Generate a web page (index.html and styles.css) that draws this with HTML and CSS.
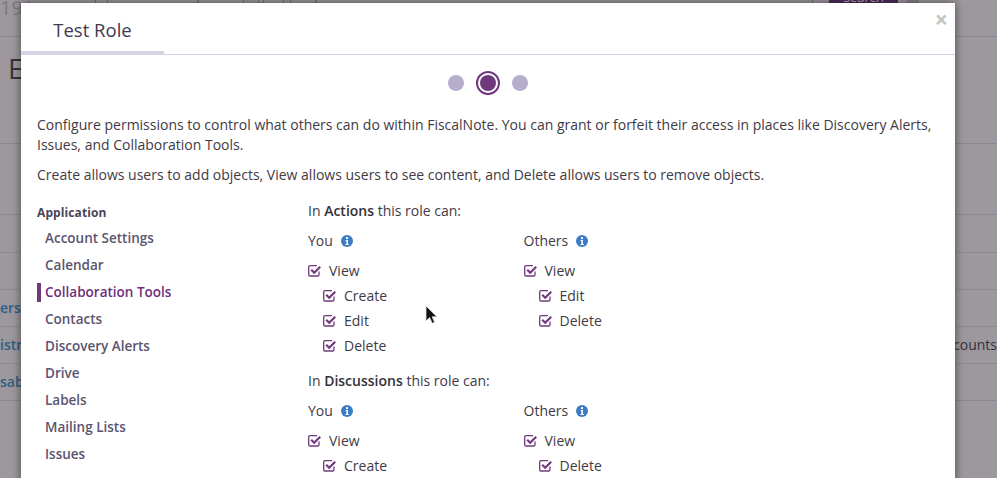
FILE: index.html
```html
<!DOCTYPE html>
<html lang="en">
<head>
<meta charset="utf-8">
<title>Test Role</title>
<link rel="stylesheet" href="styles.css">
</head>
<body>
<div class="page">
  <div class="page-top"><span class="page-date">19/</span><span class="page-ticks"></span><span class="page-search">Search</span><span class="page-square"></span></div>
  <div class="page-title"><span>E</span></div>
  <div class="page-row page-row-tall"></div>
  <div class="page-row page-row-mid"></div>
  <div class="page-row"></div>
  <div class="page-row"><a>ers</a></div>
  <div class="page-row"><a>istr</a><span>counts</span></div>
  <div class="page-row"><a>sab</a></div>
</div>
<div class="modal">
  <button class="close" aria-label="Close">&#215;</button>
  <div class="tabs"><div class="tab">Test Role</div></div>
  <div class="steps"><span class="dot"></span><span class="dot dot-on"></span><span class="dot"></span></div>
  <div class="intro">
    <p>Configure permissions to control what others can do within FiscalNote. You can grant or forfeit their access in places like Discovery Alerts, Issues, and Collaboration Tools.</p>
    <p>Create allows users to add objects, View allows users to see content, and Delete allows users to remove objects.</p>
  </div>
  <div class="body">
    <nav class="nav">
      <div class="nav-head">Application</div>
      <a class="nav-item">Account Settings</a>
      <a class="nav-item">Calendar</a>
      <a class="nav-item nav-active">Collaboration Tools</a>
      <a class="nav-item">Contacts</a>
      <a class="nav-item">Discovery Alerts</a>
      <a class="nav-item">Drive</a>
      <a class="nav-item">Labels</a>
      <a class="nav-item">Mailing Lists</a>
      <a class="nav-item">Issues</a>
    </nav>
    <div class="perms">
      <section class="perm">
        <div class="perm-title">In <b>Actions</b> this role can:</div>
        <div class="cols">
          <div class="col">
            <div class="col-head">You <svg class="info" viewBox="0 0 12 12"><circle cx="6" cy="6" r="6"/><rect x="5" y="2.1" width="2" height="1.9" fill="#fff"/><path d="M4.6 5h2.4v3.9h.8V10H4.5V8.9h.9V6.1h-.8z" fill="#fff"/></svg></div>
            <label class="check"><svg class="box" viewBox="0 0 13 13"><path class="box-frame" d="M11 7.500v3.200A1.300 1.300 0 0 1 9.700 12H2A1.300 1.300 0 0 1 .7 10.700V3A1.300 1.300 0 0 1 2 1.700h7"/><path class="box-tick" d="M3.200 5.800l3 3 6-6"/></svg>View</label>
            <label class="check sub"><svg class="box" viewBox="0 0 13 13"><path class="box-frame" d="M11 7.500v3.200A1.300 1.300 0 0 1 9.700 12H2A1.300 1.300 0 0 1 .7 10.700V3A1.300 1.300 0 0 1 2 1.700h7"/><path class="box-tick" d="M3.200 5.800l3 3 6-6"/></svg>Create</label>
            <label class="check sub"><svg class="box" viewBox="0 0 13 13"><path class="box-frame" d="M11 7.500v3.200A1.300 1.300 0 0 1 9.700 12H2A1.300 1.300 0 0 1 .7 10.700V3A1.300 1.300 0 0 1 2 1.700h7"/><path class="box-tick" d="M3.200 5.800l3 3 6-6"/></svg>Edit</label>
            <label class="check sub"><svg class="box" viewBox="0 0 13 13"><path class="box-frame" d="M11 7.500v3.200A1.300 1.300 0 0 1 9.700 12H2A1.300 1.300 0 0 1 .7 10.700V3A1.300 1.300 0 0 1 2 1.700h7"/><path class="box-tick" d="M3.200 5.800l3 3 6-6"/></svg>Delete</label>
          </div>
          <div class="col">
            <div class="col-head">Others <svg class="info" viewBox="0 0 12 12"><circle cx="6" cy="6" r="6"/><rect x="5" y="2.1" width="2" height="1.9" fill="#fff"/><path d="M4.6 5h2.4v3.9h.8V10H4.5V8.9h.9V6.1h-.8z" fill="#fff"/></svg></div>
            <label class="check"><svg class="box" viewBox="0 0 13 13"><path class="box-frame" d="M11 7.500v3.200A1.300 1.300 0 0 1 9.700 12H2A1.300 1.300 0 0 1 .7 10.700V3A1.300 1.300 0 0 1 2 1.700h7"/><path class="box-tick" d="M3.200 5.800l3 3 6-6"/></svg>View</label>
            <label class="check sub"><svg class="box" viewBox="0 0 13 13"><path class="box-frame" d="M11 7.500v3.200A1.300 1.300 0 0 1 9.700 12H2A1.300 1.300 0 0 1 .7 10.700V3A1.300 1.300 0 0 1 2 1.700h7"/><path class="box-tick" d="M3.200 5.800l3 3 6-6"/></svg>Edit</label>
            <label class="check sub"><svg class="box" viewBox="0 0 13 13"><path class="box-frame" d="M11 7.500v3.200A1.300 1.300 0 0 1 9.700 12H2A1.300 1.300 0 0 1 .7 10.700V3A1.300 1.300 0 0 1 2 1.700h7"/><path class="box-tick" d="M3.200 5.800l3 3 6-6"/></svg>Delete</label>
          </div>
        </div>
      </section>
      <section class="perm">
        <div class="perm-title">In <b>Discussions</b> this role can:</div>
        <div class="cols">
          <div class="col">
            <div class="col-head">You <svg class="info" viewBox="0 0 12 12"><circle cx="6" cy="6" r="6"/><rect x="5" y="2.1" width="2" height="1.9" fill="#fff"/><path d="M4.6 5h2.4v3.9h.8V10H4.5V8.9h.9V6.1h-.8z" fill="#fff"/></svg></div>
            <label class="check"><svg class="box" viewBox="0 0 13 13"><path class="box-frame" d="M11 7.500v3.200A1.300 1.300 0 0 1 9.700 12H2A1.300 1.300 0 0 1 .7 10.700V3A1.300 1.300 0 0 1 2 1.700h7"/><path class="box-tick" d="M3.200 5.800l3 3 6-6"/></svg>View</label>
            <label class="check sub"><svg class="box" viewBox="0 0 13 13"><path class="box-frame" d="M11 7.500v3.200A1.300 1.300 0 0 1 9.700 12H2A1.300 1.300 0 0 1 .7 10.700V3A1.300 1.300 0 0 1 2 1.700h7"/><path class="box-tick" d="M3.200 5.800l3 3 6-6"/></svg>Create</label>
          </div>
          <div class="col">
            <div class="col-head">Others <svg class="info" viewBox="0 0 12 12"><circle cx="6" cy="6" r="6"/><rect x="5" y="2.1" width="2" height="1.9" fill="#fff"/><path d="M4.6 5h2.4v3.9h.8V10H4.5V8.9h.9V6.1h-.8z" fill="#fff"/></svg></div>
            <label class="check"><svg class="box" viewBox="0 0 13 13"><path class="box-frame" d="M11 7.500v3.200A1.300 1.300 0 0 1 9.700 12H2A1.300 1.300 0 0 1 .7 10.700V3A1.300 1.300 0 0 1 2 1.700h7"/><path class="box-tick" d="M3.200 5.800l3 3 6-6"/></svg>View</label>
            <label class="check sub"><svg class="box" viewBox="0 0 13 13"><path class="box-frame" d="M11 7.500v3.200A1.300 1.300 0 0 1 9.700 12H2A1.300 1.300 0 0 1 .7 10.700V3A1.300 1.300 0 0 1 2 1.700h7"/><path class="box-tick" d="M3.200 5.800l3 3 6-6"/></svg>Delete</label>
          </div>
        </div>
      </section>
    </div>
  </div>
  <svg class="cursor" viewBox="0 0 12 20"><path d="M1 1v15l3.600-3.400 2.600 5.600 2.400-1-2.500-5.400h4.800z" fill="#111" stroke="#ddd" stroke-width=".8"/></svg>
</div>
</body>
</html>
```
FILE: styles.css
```css
html, body { margin: 0; height: 100%; overflow: hidden; }
body { background: #9d989d; font-family: "Open Sans", sans-serif; color: #3f3a44; }
.page { display: flex; flex-direction: column; height: 478px; }
.page-top { height: 36px; border-bottom: 1px solid #8b8797; display: flex; font-size: 20px; color: #7c7880; position: relative; }
.page-date { margin-top: -6px; }
.page-ticks { position: absolute; left: 0; top: 0; width: 820px; height: 3px; background:
  linear-gradient(#77737c, #77737c) 95px 0 / 1px 3px no-repeat,
  linear-gradient(#77737c, #77737c) 107px 0 / 1px 3px no-repeat,
  linear-gradient(#77737c, #77737c) 197px 0 / 2px 3px no-repeat,
  linear-gradient(#77737c, #77737c) 243px 0 / 1px 3px no-repeat,
  linear-gradient(#77737c, #77737c) 258px 0 / 1px 3px no-repeat,
  linear-gradient(#77737c, #77737c) 263px 0 / 1px 3px no-repeat,
  linear-gradient(#77737c, #77737c) 283px 0 / 1px 3px no-repeat,
  linear-gradient(#77737c, #77737c) 290px 0 / 1px 3px no-repeat,
  linear-gradient(#77737c, #77737c) 315px 0 / 2px 3px no-repeat,
  linear-gradient(#77737c, #77737c) 812px 0 / 1px 3px no-repeat; }
.page-search { position: absolute; left: 829px; top: -10px; width: 69px; height: 14px; background: #4f2c5a; color: #b8a8bd; font-size: 13px; line-height: 14px; text-align: center; }
.page-square { position: absolute; left: 907px; top: -8px; width: 12px; height: 12px; background: #85818a; }
.page-title { height: 106px; border-bottom: 1px solid #8b8797; font-size: 28px; color: #37333b; padding-left: 8px; line-height: 62px; }
.page-row { height: 36px; border-bottom: 1px solid #8d8990; font-size: 14px; line-height: 36px; display: flex; justify-content: space-between; color: #34323a; }
.page-row a { color: #2f5f86; font-weight: 600; }
.page-row:last-child { border-bottom-color: #8b8797; }
.page-row-tall { height: 70px; border-bottom-color: #8b8797; }
.page-row-mid { height: 37px; }
.modal { position: absolute; left: 21px; top: 3px; width: 934px; height: 500px; background: #fff; box-shadow: 0 0 9px rgba(0,0,0,.55); }
.close { position: absolute; right: 7px; top: 5px; padding: 0; border: 0; background: none; font: 700 23px/23px "Open Sans", sans-serif; color: #c4c4c4; }
.tabs { height: 51px; border-bottom: 1px solid #d5d2e4; display: flex; }
.tab { width: 143px; height: 48px; border-bottom: 3px solid #d5d2e4; text-align: center; font-size: 18.5px; line-height: 54px; color: #3f3a50; }
.steps { display: flex; justify-content: center; align-items: center; gap: 12px; height: 56px; }
.dot { width: 16px; height: 16px; border-radius: 50%; background: #b6aecb; }
.dot-on { box-sizing: content-box; padding: 2px; border: 2px solid #6f3a7c; background: #6f3a7c content-box; }
.intro { padding: 4px 16px 0; font-size: 14px; line-height: 20px; color: #3f3a44; }
.intro p { margin: 0 0 10px; }
.body { display: flex; margin-top: 18px; padding-left: 16px; }
.nav { width: 271px; flex: none; }
.nav-head { font-size: 12px; font-weight: 700; line-height: 20px; margin-bottom: 2px; color: #4b4558; letter-spacing: .1px; }
.nav-item { display: block; height: 27px; line-height: 27px; padding-left: 8px; font-size: 13.5px; font-weight: 600; color: #5a546f; position: relative; }
.nav-active { color: #6f2f7c; }
.nav-active::before { content: ""; position: absolute; left: 0; top: 4px; width: 4px; height: 19px; background: #6f3a7c; }
.perms { margin-top: -2px; }
.perm { margin-bottom: 13px; }
.perm-title { font-size: 14px; line-height: 20px; color: #3f3a44; }
.perm-title b { font-weight: 600; color: #34303a; }
.cols { display: flex; margin-top: 8px; }
.col { width: 215.5px; }
.col-head { height: 24px; line-height: 24px; font-size: 14px; display: flex; align-items: center; gap: 8px; margin-bottom: 5px; }
.info { width: 12px; height: 12px; fill: #3b7cc4; }
.check { display: flex; align-items: center; height: 25px; font-size: 14px; gap: 8px; }
.sub { padding-left: 15px; }
.box { width: 13px; height: 13px; flex: none; }
.box-frame { fill: none; stroke: #6f3a7c; stroke-width: 1.300; }
.box-tick { fill: none; stroke: #6f3a7c; stroke-width: 2.200; }
.cursor { position: absolute; left: 404px; top: 302px; width: 12px; height: 20px; }
```
